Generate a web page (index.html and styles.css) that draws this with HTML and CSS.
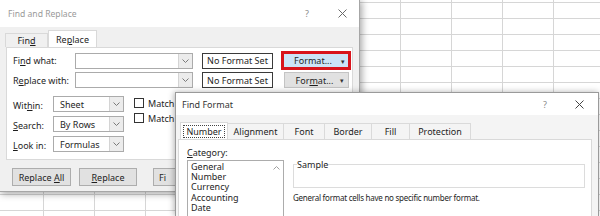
FILE: index.html
```html
<!DOCTYPE html>
<html>
<head>
<meta charset="utf-8">
<link rel="stylesheet" href="styles.css">
</head>
<body>
<div class="sheet">
  <section class="dlg dlg-replace">
    <header class="titlebar">
      <span class="title">Find and Replace</span>
      <span class="tb-icons">
        <span class="help">?</span>
        <svg class="close" width="9" height="9" viewBox="0 0 9 9"><path d="M0.5 0.5 L8.5 8.5 M8.5 0.5 L0.5 8.5" stroke="#6a6a6a" stroke-width="1" fill="none"/></svg>
      </span>
    </header>
    <div class="dlg-body">
      <div class="tabs">
        <div class="tab"><span>Fin<u>d</u></span></div>
        <div class="tab active"><span>Re<u>p</u>lace</span></div>
      </div>
      <div class="panel">
        <div class="row row-first">
          <span class="lbl lbl-long">Fi<u>n</u>d what:</span>
          <div class="combo combo-wide"><span class="val"></span><span class="arrow"><svg width="7" height="4" viewBox="0 0 7 4"><path d="M0.5 0.5 L3.5 3.5 L6.5 0.5" stroke="#7a7a7a" fill="none"/></svg></span></div>
          <div class="nfs">No Format Set</div>
          <div class="fmt-btn fmt-hl"><span>Format...</span><span class="caret">&#9662;</span></div>
        </div>
        <div class="row">
          <span class="lbl lbl-long">R<u>e</u>place with:</span>
          <div class="combo combo-wide"><span class="val"></span><span class="arrow"><svg width="7" height="4" viewBox="0 0 7 4"><path d="M0.5 0.5 L3.5 3.5 L6.5 0.5" stroke="#7a7a7a" fill="none"/></svg></span></div>
          <div class="nfs">No Format Set</div>
          <div class="fmt-btn"><span>For<u>m</u>at...</span><span class="caret">&#9662;</span></div>
        </div>
        <div class="options">
          <div class="opt-grid">
            <span class="lbl">Wit<u>h</u>in:</span>
            <div class="combo combo-short"><span class="val">Sheet</span><span class="arrow"><svg width="7" height="4" viewBox="0 0 7 4"><path d="M0.5 0.5 L3.5 3.5 L6.5 0.5" stroke="#7a7a7a" fill="none"/></svg></span></div>
            <span class="lbl"><u>S</u>earch:</span>
            <div class="combo combo-short"><span class="val">By Rows</span><span class="arrow"><svg width="7" height="4" viewBox="0 0 7 4"><path d="M0.5 0.5 L3.5 3.5 L6.5 0.5" stroke="#7a7a7a" fill="none"/></svg></span></div>
            <span class="lbl"><u>L</u>ook in:</span>
            <div class="combo combo-short"><span class="val">Formulas</span><span class="arrow"><svg width="7" height="4" viewBox="0 0 7 4"><path d="M0.5 0.5 L3.5 3.5 L6.5 0.5" stroke="#7a7a7a" fill="none"/></svg></span></div>
          </div>
          <div class="checks">
            <div class="check"><span class="box"></span><span>Match</span></div>
            <div class="check"><span class="box"></span><span>Match</span></div>
          </div>
        </div>
      </div>
      <div class="buttons">
        <div class="btn"><span>Replace <u>A</u>ll</span></div>
        <div class="btn"><span><u>R</u>eplace</span></div>
        <div class="btn btn-gap"><span>Fi</span></div>
      </div>
    </div>
  </section>

  <section class="dlg dlg-format">
    <header class="titlebar titlebar-2">
      <span class="title title-active">Find Format</span>
      <span class="tb-icons tb-icons-2">
        <span class="help">?</span>
        <svg class="close" width="9" height="9" viewBox="0 0 9 9"><path d="M0.5 0.5 L8.5 8.5 M8.5 0.5 L0.5 8.5" stroke="#444" stroke-width="1" fill="none"/></svg>
      </span>
    </header>
    <div class="dlg-body dlg-body-2">
      <div class="tabs tabs-2">
        <div class="tab2 active"><span class="focus">Number</span></div>
        <div class="tab2 w-align">Alignment</div>
        <div class="tab2 w-font">Font</div>
        <div class="tab2 w-border">Border</div>
        <div class="tab2 w-fill">Fill</div>
        <div class="tab2 w-prot">Protection</div>
      </div>
      <div class="panel panel-2">
        <div class="cat-col">
          <div class="cat-lbl"><u>C</u>ategory:</div>
          <div class="listbox">
            <ul class="items">
              <li>General</li>
              <li>Number</li>
              <li>Currency</li>
              <li>Accounting</li>
              <li>Date</li>
            </ul>
            <div class="scroll"><svg width="7" height="4" viewBox="0 0 7 4"><path d="M0.5 3.5 L3.5 0.5 L6.5 3.5" stroke="#a0a0a0" fill="none"/></svg></div>
          </div>
        </div>
        <div class="sample-col">
          <fieldset class="sample">
            <legend>Sample</legend>
          </fieldset>
          <p class="desc">General format cells have no specific number format.</p>
        </div>
      </div>
    </div>
  </section>
</div>
</body>
</html>
```

FILE: styles.css
```css
* { box-sizing: border-box; }
html, body { margin: 0; padding: 0; }
body {
  width: 600px;
  height: 216px;
  overflow: hidden;
  font-family: "Noto Sans", "Open Sans", sans-serif;
  font-size: 9px;
  color: #1e1e1e;
}
u { text-decoration: underline; text-underline-offset: 1px; }

.sheet {
  position: relative;
  width: 600px;
  height: 216px;
  overflow: hidden;
  background-color: #ffffff;
  background-image:
    linear-gradient(to right, #d6d6d6 1px, transparent 1px),
    linear-gradient(to bottom, #d6d6d6 1px, transparent 1px);
  background-size: 51px 100%, 100% 16px;
  background-position: 43px 0, 0 2px;
}

.dlg {
  position: absolute;
  display: flex;
  flex-direction: column;
  border: 1px solid #a6a6a6;
  background: #f0f0f0;
  overflow: hidden;
}
.dlg-replace {
  left: -1px;
  top: -1px;
  width: 361px;
  height: 193px;
  box-shadow: 2px 2px 7px rgba(0,0,0,0.35);
}
.dlg-format {
  left: 175px;
  top: 92px;
  width: 424px;
  height: 124px;
  border-bottom: none;
  box-shadow: -1px 0 6px rgba(0,0,0,0.3);
  border-color: #9a9a9a;
}

.titlebar {
  height: 27px;
  flex: none;
  background: #ffffff;
  display: flex;
  align-items: center;
  justify-content: space-between;
  padding: 0 12px 0 8px;
}
.title { color: #9a9a9a; font-size: 8.6px; }
.title-active { color: #333; font-size: 9px; }
.tb-icons { display: flex; align-items: center; gap: 29px; }
.help { color: #8a8a8a; font-size: 9px; }
.titlebar-2 { height: 22px; padding: 0 14px 0 6px; }
.tb-icons-2 { gap: 28px; }

.dlg-body { flex: 1; display: flex; flex-direction: column; padding: 3px 6px 0 6px; }

.tabs { display: flex; align-items: flex-end; height: 17px; }
.tab {
  height: 14px;
  border: 1px solid #d9d9d9;
  border-bottom: none;
  background: #f0f0f0;
  display: flex;
  align-items: center;
  justify-content: center;
  line-height: 1;
}
.tab:first-child { width: 43px; margin-left: -1px; }
.tab.active {
  width: 49px;
  background: #fff;
  margin-bottom: -1px;
  height: 18px;
}

.panel {
  background: #fff;
  border: 1px solid #d9d9d9;
  height: 113px;
  width: 347px;
  padding: 3px 0 0 6px;
  display: flex;
  flex-direction: column;
}

.row { display: flex; align-items: center; height: 19px; }
.row + .row { margin-top: 1px; height: 18px; }
.lbl { display: inline-block; line-height: 1; }
.lbl-long { width: 62px; }

.combo {
  height: 16px;
  border: 1px solid #ababab;
  background: #fff;
  display: flex;
  align-items: stretch;
}
.combo .val { flex: 1; padding-left: 6px; display: flex; align-items: center; line-height: 1; }
.combo .arrow {
  width: 14px;
  flex: none;
  background: #ececec;
  border-left: 1px solid #d4d4d4;
  display: flex;
  align-items: center;
  justify-content: center;
}
.combo-wide { width: 118px; }
.combo-short { width: 71px; }

.nfs {
  margin-left: 9px;
  width: 71px;
  height: 16px;
  border: 1px solid #3a3a3a;
  display: flex;
  align-items: center;
  justify-content: center;
  line-height: 1;
  background: #fff;
}

.fmt-btn {
  margin-left: 11px;
  width: 65px;
  height: 16px;
  background: #e1e1e1;
  border: 1px solid #c4c4c4;
  display: flex;
  align-items: center;
  justify-content: center;
  position: relative;
  line-height: 1;
  padding-right: 4px;
}
.fmt-hl {
  margin-left: 8px;
  width: 70px;
  height: 19px;
  border: 3px solid #d8141c;
  background: #cce4f7;
  padding-right: 6px;
}
.caret { position: absolute; right: 4px; top: 50%; transform: translateY(-50%); font-size: 7px; color: #333; }
.fmt-hl .caret { right: 3px; }

.options { display: flex; margin-top: 7px; }
.opt-grid {
  display: grid;
  grid-template-columns: 40px 71px;
  row-gap: 4px;
  align-items: center;
}
.opt-grid .lbl { position: relative; top: 1px; }
.checks { display: flex; flex-direction: column; gap: 5px; margin-left: 10px; margin-top: 2px; }
.check { display: flex; align-items: center; white-space: nowrap; line-height: 1; height: 10px; }
.box {
  width: 10px;
  height: 10px;
  border: 1px solid #333;
  background: #fff;
  margin-right: 4px;
  flex: none;
}

.buttons { display: flex; padding: 8px 0 0 6px; }
.btn {
  width: 59px;
  height: 18px;
  flex: none;
  background: #e1e1e1;
  border: 1px solid #adadad;
  display: flex;
  align-items: center;
  justify-content: center;
  line-height: 1;
}
.btn + .btn { margin-left: 8px; width: 58px; }
.btn.btn-gap { margin-left: 16px; justify-content: flex-start; padding-left: 5px; }

/* Find Format dialog */
.dlg-body-2 { padding: 7px 0 0 2px; background: #f4f4f4; }
.tabs-2 { padding-left: 2px; height: 17px; }
.tab2 {
  height: 16px;
  border: 1px solid #dadada;
  border-bottom: none;
  border-left: none;
  background: #f4f4f4;
  display: flex;
  align-items: center;
  justify-content: center;
  line-height: 1;
}
.tab2.active {
  width: 48px;
  background: #fff;
  border-left: 1px solid #dadada;
  margin-bottom: -1px;
  height: 18px;
}
.focus { border: 1px dotted #444; padding: 1px 2px; }
.w-align { width: 56px; }
.w-font { width: 41px; }
.w-border { width: 47px; }
.w-fill { width: 38px; }
.w-prot { width: 61px; }

.panel-2 {
  width: 414px;
  height: 80px;
  flex-direction: row;
  border-bottom: none;
  padding: 6px 0 0 8px;
}
.cat-col { width: 97px; }
.cat-lbl { line-height: 1; height: 14px; padding-top: 2px; }
.listbox {
  width: 97px;
  height: 60px;
  border: 1px solid #acacac;
  border-bottom: none;
  display: flex;
}
.items { list-style: none; margin: 0; padding: 1px 0 0 3px; flex: 1; }
.items li { height: 10.2px; line-height: 10.2px; }
.scroll { width: 14px; display: flex; justify-content: center; padding-top: 5px; }

.sample-col { margin-left: 9px; width: 292px; }
.sample {
  margin: 0;
  margin-top: 14px;
  padding: 0;
  height: 28px;
  border: 1px solid #dcdcdc;
}
.sample legend { padding: 0; margin-left: 3px; line-height: 1; }
.desc { margin: 6px 0 0 0; line-height: 1; font-size: 8px; letter-spacing: -0.25px; }
```
